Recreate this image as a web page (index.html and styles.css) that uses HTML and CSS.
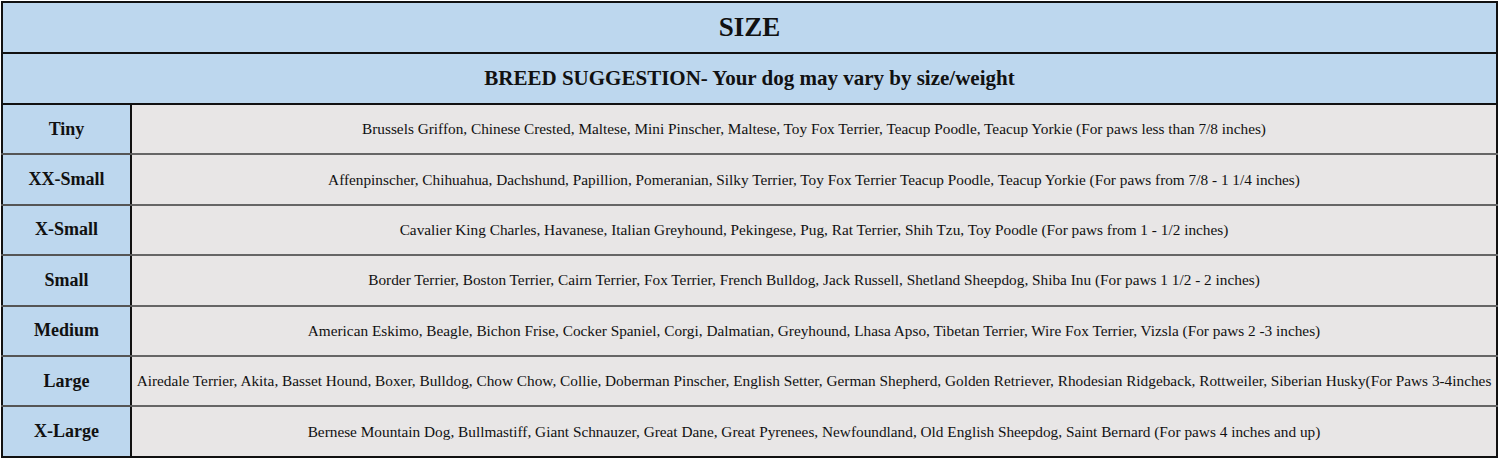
FILE: index.html
```html
<!DOCTYPE html>
<html>
<head>
<meta charset="utf-8">
<link rel="stylesheet" href="styles.css">
</head>
<body>
<table class="size-table">
  <colgroup><col class="col-label"><col class="col-breeds"></colgroup>
  <tr class="head head-title"><th colspan="2">SIZE</th></tr>
  <tr class="head head-sub"><th colspan="2">BREED SUGGESTION- Your dog may vary by size/weight</th></tr>
  <tr><th class="label">Tiny</th><td class="breeds">Brussels Griffon, Chinese Crested, Maltese, Mini Pinscher, Maltese, Toy Fox Terrier, Teacup Poodle, Teacup Yorkie (For paws less than 7/8 inches)</td></tr>
  <tr><th class="label">XX-Small</th><td class="breeds">Affenpinscher, Chihuahua, Dachshund, Papillion, Pomeranian, Silky Terrier, Toy Fox Terrier Teacup Poodle, Teacup Yorkie (For paws from 7/8 - 1 1/4 inches)</td></tr>
  <tr><th class="label">X-Small</th><td class="breeds">Cavalier King Charles, Havanese, Italian Greyhound, Pekingese, Pug, Rat Terrier, Shih Tzu, Toy Poodle (For paws from 1 - 1/2 inches)</td></tr>
  <tr><th class="label">Small</th><td class="breeds">Border Terrier, Boston Terrier, Cairn Terrier, Fox Terrier, French Bulldog, Jack Russell, Shetland Sheepdog, Shiba Inu (For paws 1 1/2 - 2 inches)</td></tr>
  <tr><th class="label">Medium</th><td class="breeds">American Eskimo, Beagle, Bichon Frise, Cocker Spaniel, Corgi, Dalmatian, Greyhound, Lhasa Apso, Tibetan Terrier, Wire Fox Terrier, Vizsla (For paws 2 -3 inches)</td></tr>
  <tr><th class="label">Large</th><td class="breeds">Airedale Terrier, Akita, Basset Hound, Boxer, Bulldog, Chow Chow, Collie, Doberman Pinscher, English Setter, German Shepherd, Golden Retriever, Rhodesian Ridgeback, Rottweiler, Siberian Husky(For Paws 3-4inches</td></tr>
  <tr><th class="label">X-Large</th><td class="breeds">Bernese Mountain Dog, Bullmastiff, Giant Schnauzer, Great Dane, Great Pyrenees, Newfoundland, Old English Sheepdog, Saint Bernard (For paws 4 inches and up)</td></tr>
</table>
</body>
</html>
```
FILE: styles.css
```css
html, body {
  margin: 0;
  padding: 0;
  background: #ffffff;
}
body {
  padding: 1px 0 0 1px;
  font-family: "Liberation Serif", "Times New Roman", serif;
  color: #111;
}
.size-table {
  width: 1497px;
  border-collapse: collapse;
  border: 2px solid #111;
  table-layout: fixed;
}
.col-label {
  width: 129px;
}
.size-table th, .size-table td {
  padding: 0;
  text-align: center;
  vertical-align: middle;
}
.head th {
  background: #bdd7ee;
  border-bottom: 2px solid #111;
  font-weight: bold;
}
.head-title th {
  height: 49px;
  font-size: 27px;
}
.head-sub th {
  height: 49px;
  font-size: 21px;
}
.label {
  background: #bdd7ee;
  border-right: 2px solid #111;
  border-bottom: 2px solid #555;
  font-size: 18px;
  font-weight: bold;
  height: 48.4px;
}
.breeds {
  background: #e8e6e6;
  border-bottom: 2px solid #666;
  font-size: 15.3px;
  white-space: nowrap;
  overflow: hidden;
}
tr:last-child .label, tr:last-child .breeds {
  border-bottom: none;
}
```
